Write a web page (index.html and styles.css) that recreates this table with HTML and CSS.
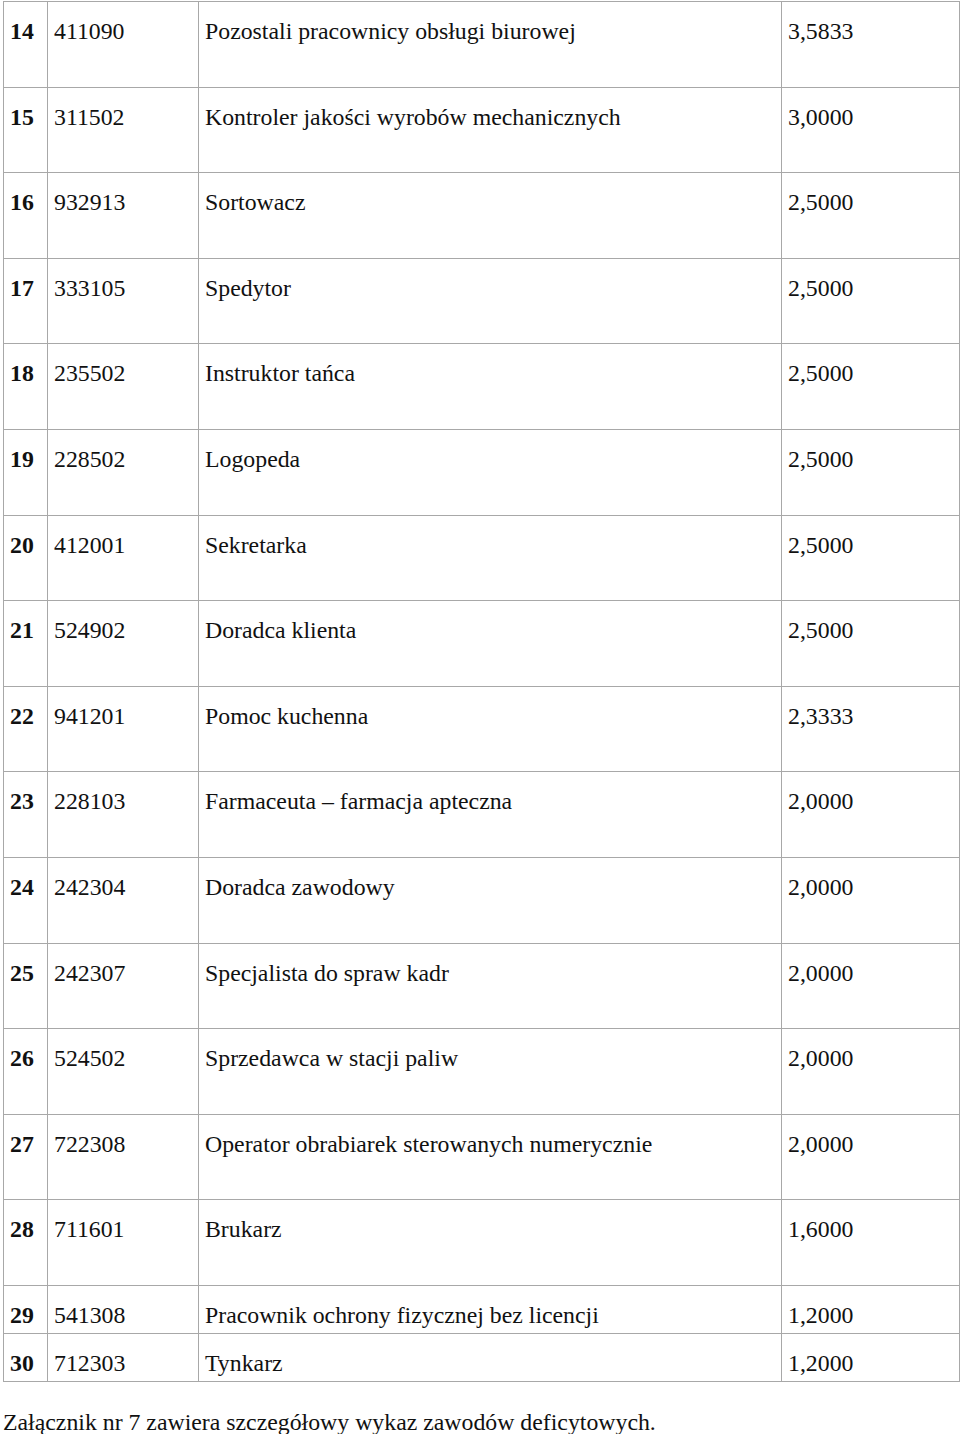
FILE: index.html
```html
<!DOCTYPE html>
<html lang="pl">
<head>
<meta charset="utf-8">
<link rel="stylesheet" href="styles.css">
</head>
<body>
<table class="jobs">
<colgroup><col class="c-no"><col class="c-code"><col class="c-name"><col class="c-val"></colgroup>
<tbody>
<tr class="tall"><td class="no">14</td><td>411090</td><td>Pozostali pracownicy obsługi biurowej</td><td>3,5833</td></tr>
<tr class="tall"><td class="no">15</td><td>311502</td><td>Kontroler jakości wyrobów mechanicznych</td><td>3,0000</td></tr>
<tr class="tall"><td class="no">16</td><td>932913</td><td>Sortowacz</td><td>2,5000</td></tr>
<tr class="tall"><td class="no">17</td><td>333105</td><td>Spedytor</td><td>2,5000</td></tr>
<tr class="tall"><td class="no">18</td><td>235502</td><td>Instruktor tańca</td><td>2,5000</td></tr>
<tr class="tall"><td class="no">19</td><td>228502</td><td>Logopeda</td><td>2,5000</td></tr>
<tr class="tall"><td class="no">20</td><td>412001</td><td>Sekretarka</td><td>2,5000</td></tr>
<tr class="tall"><td class="no">21</td><td>524902</td><td>Doradca klienta</td><td>2,5000</td></tr>
<tr class="tall"><td class="no">22</td><td>941201</td><td>Pomoc kuchenna</td><td>2,3333</td></tr>
<tr class="tall"><td class="no">23</td><td>228103</td><td>Farmaceuta – farmacja apteczna</td><td>2,0000</td></tr>
<tr class="tall"><td class="no">24</td><td>242304</td><td>Doradca zawodowy</td><td>2,0000</td></tr>
<tr class="tall"><td class="no">25</td><td>242307</td><td>Specjalista do spraw kadr</td><td>2,0000</td></tr>
<tr class="tall"><td class="no">26</td><td>524502</td><td>Sprzedawca w stacji paliw</td><td>2,0000</td></tr>
<tr class="tall"><td class="no">27</td><td>722308</td><td>Operator obrabiarek sterowanych numerycznie</td><td>2,0000</td></tr>
<tr class="tall"><td class="no">28</td><td>711601</td><td>Brukarz</td><td>1,6000</td></tr>
<tr class="short"><td class="no">29</td><td>541308</td><td>Pracownik ochrony fizycznej bez licencji</td><td>1,2000</td></tr>
<tr class="short"><td class="no">30</td><td>712303</td><td>Tynkarz</td><td>1,2000</td></tr>
</tbody>
</table>
<p class="note">Załącznik nr 7 zawiera szczegółowy wykaz zawodów deficytowych.</p>
</body>
</html>
```
FILE: styles.css
```css
html, body {
  margin: 0;
  padding: 0;
  background: #ffffff;
}
body {
  font-family: "Liberation Serif", "Times New Roman", serif;
  font-size: 23.8px;
  color: #111111;
}
.jobs {
  border-collapse: collapse;
  margin: 1px 0 0 3px;
  width: 956px;
  table-layout: fixed;
}
.c-no { width: 44px; }
.c-code { width: 151px; }
.c-name { width: 583px; }
.c-val { width: 178px; }
.jobs td {
  border: 1px solid #a8a8a8;
  vertical-align: top;
  padding: 17px 6px 0 6px;
  line-height: 24px;
  white-space: nowrap;
}
.jobs td.no {
  font-weight: bold;
}
.jobs tr.tall { height: 85.6px; }
.jobs tr.short { height: 48px; }
.note {
  margin: 28px 0 0 3px;
  line-height: 24px;
}
```
